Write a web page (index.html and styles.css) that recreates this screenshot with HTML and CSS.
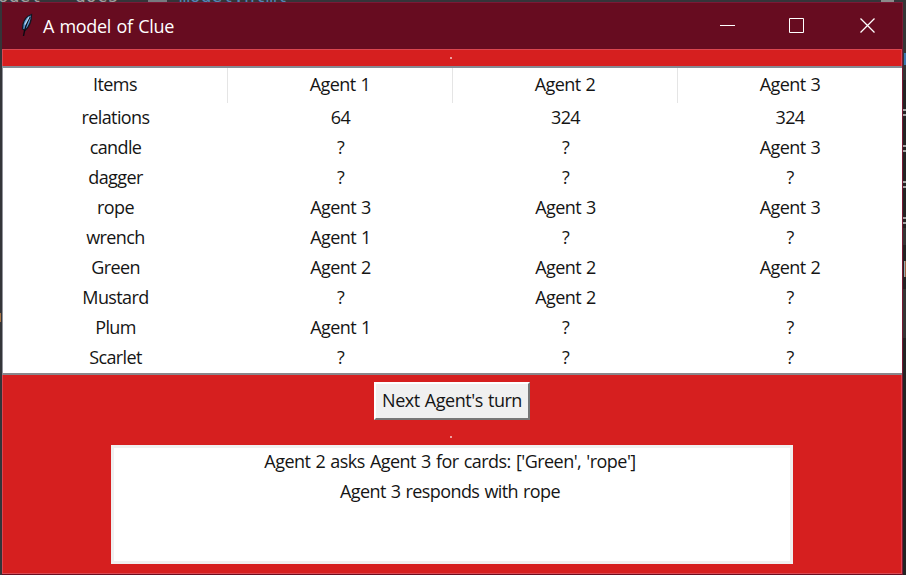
FILE: index.html
```
<!DOCTYPE html>
<html lang="en">
<head>
<meta charset="utf-8">
<title>A model of Clue</title>
<link rel="stylesheet" href="styles.css">
</head>
<body>
<div class="backdrop">
  <div class="crumbs"><span class="c1">model</span><span class="c2">docs</span><i class="file-icon"></i><span class="c3">model.html</span></div>
  <i class="mark mark-left"></i>
  <i class="mark mark-top"></i>
  <svg class="edge" width="3" height="575" viewBox="0 0 3 575" shape-rendering="crispEdges">
    <path fill="#242424" d="M0 0h3v575H0z"/>
    <path fill="#353535" d="M0 0h3v80H0zM0 228h3v17H0zM0 289h3v49H0z"/>
    <path fill="#3c78b0" d="M1 53h2v12H1z"/>
    <path fill="#a5a5a5" d="M0 109h3v2H0zM0 114h3v2H0zM0 145h3v2H0zM0 150h3v2H0zM0 181h3v2H0zM0 186h3v2H0zM0 217h3v2H0zM0 222h3v2H0z"/>
    <path fill="#9ea9b1" d="M1 261h1v16H1z"/><path fill="#9e6542" d="M2 261h1v16H2z"/>
  </svg>
</div>
<main class="window">
  <header class="titlebar">
    <svg class="feather" width="16" height="26" viewBox="0 0 16 26">
      <path d="M12.500 2.500C8 4 5 8 4 12L3.500 17l2.500 1.500C10 15 12.500 9 12.500 2.500z" fill="#5a94cf" stroke="#101722" stroke-width="1.300"/>
      <path d="M11 5C8 10 6 15 4.500 24" fill="none" stroke="#0a0a12" stroke-width="1.400"/>
      <path d="M10 5L6 12.500" stroke="#b7dcf3" stroke-width="1.300"/>
    </svg>
    <h1>A model of Clue</h1>
    <svg class="controls" width="180" height="46" viewBox="0 0 180 46" fill="none" stroke="#fff">
      <path d="M0 22.500h15M69.500 15.500h14v14h-14z"/>
      <path stroke-width="1.300" d="M140.500 15.500l14 14M154.500 15.500l-14 14"/>
    </svg>
  </header>
  <section class="content">
    <div class="spacer top"><i class="dot"></i></div>
    <table>
      <thead><tr><th>Items</th><th>Agent 1</th><th>Agent 2</th><th>Agent 3</th></tr></thead>
      <tbody>
        <tr><td>relations</td><td>64</td><td>324</td><td>324</td></tr>
        <tr><td>candle</td><td>?</td><td>?</td><td>Agent 3</td></tr>
        <tr><td>dagger</td><td>?</td><td>?</td><td>?</td></tr>
        <tr><td>rope</td><td>Agent 3</td><td>Agent 3</td><td>Agent 3</td></tr>
        <tr><td>wrench</td><td>Agent 1</td><td>?</td><td>?</td></tr>
        <tr><td>Green</td><td>Agent 2</td><td>Agent 2</td><td>Agent 2</td></tr>
        <tr><td>Mustard</td><td>?</td><td>Agent 2</td><td>?</td></tr>
        <tr><td>Plum</td><td>Agent 1</td><td>?</td><td>?</td></tr>
        <tr><td>Scarlet</td><td>?</td><td>?</td><td>?</td></tr>
      </tbody>
    </table>
    <button class="next">Next Agent's turn</button>
    <div class="spacer mid"><i class="dot"></i></div>
    <div class="log">
      <p class="ask">Agent 2 asks Agent 3 for cards: ['Green', 'rope']</p>
      <p>Agent 3 responds with rope</p>
    </div>
  </section>
</main>
</body>
</html>
```
FILE: styles.css
```
* { box-sizing: border-box; }
body {
  margin: 0;
  width: 906px;
  height: 575px;
  overflow: hidden;
  position: relative;
  background: #343539;
  font: 18px/30px "Open Sans", "Noto Sans", sans-serif;
  letter-spacing: -0.6px;
  word-spacing: 1px;
  color: #151515;
}
.backdrop { position: absolute; inset: 0; overflow: hidden; }
.crumbs {
  position: absolute;
  left: -13px;
  top: -16px;
  display: flex;
  height: 24px;
  font: 18px/24px "DejaVu Sans Mono", monospace;
  letter-spacing: 0;
  color: #a0a0a0;
}
.c1 { width: 88px; }
.c2 { width: 73px; }
.c3 { color: #5386b5; }
.file-icon { width: 19px; height: 19px; margin-right: 12px; background: #777b80; }
.edge { position: absolute; right: 0; top: 0; }
.mark { position: absolute; }
.mark-left { left: 0; top: 313px; width: 1px; height: 9px; background: #a87545; }
.mark-top { left: 881px; top: 0; width: 13px; height: 2px; background: #8b8b8b; }
.window {
  position: relative;
  margin: 2px 3px 0 2px;
  height: 573px;
  border: 1px solid #7b1935;
  border-left: 0;
  border-bottom-color: #6a0d20;
  background: #670c20;
}
.titlebar { display: flex; align-items: center; height: 46px; color: #fff; }
.feather { margin: -2px 8px 0 17px; }
h1 { margin: 0; font-size: 18px; font-weight: 400; letter-spacing: -0.3px; }
.controls { margin-left: auto; margin-right: 2px; }
.content {
  height: 525px;
  display: flex;
  flex-direction: column;
  align-items: center;
  border: 1px solid #dc4650;
  border-bottom-color: #d94b56;
  background: #d61f1f;
}
.spacer { width: 100%; flex: none; display: flex; justify-content: center; }
.top { height: 16px; padding-top: 7px; }
.dot { width: 2px; height: 2px; margin-right: 2px; background: #eca0a0; }
table {
  width: 900px;
  margin: 0 -1px;
  flex: none;
  height: 309px;
  table-layout: fixed;
  border-spacing: 0;
  text-align: center;
  background: #fff;
  border-top: 2px solid #858b94;
  border-left: 1px solid #92939b;
  border-bottom: 2px solid #89868b;
}
th, td { padding: 0 0 2px; font-weight: 400; line-height: 28px; }
th { width: 225px; height: 35px; padding-bottom: 4px; border-right: 1px solid #e5e5e5; }
th:last-child { width: 224px; border-right: 0; }
td { height: 30px; }
.next {
  flex: none;
  width: 156px;
  height: 38px;
  margin: 7px 0 0;
  padding: 0 0 2px;
  font: inherit;
  letter-spacing: -0.48px;
  word-spacing: 1px;
  line-height: 28px;
  color: #151515;
  background: #f0f0f0;
  border: 2px solid;
  border-color: #fff #777 #777 #fff;
}
.mid { height: 25px; padding-top: 16px; }
.log {
  flex: none;
  width: 682px;
  height: 119px;
  border: 3px solid #f0f0f0;
  background: #fff;
  text-align: center;
}
p { margin: 0; height: 30px; padding-right: 4px; line-height: 26px; }
.ask { letter-spacing: -0.54px; }
```
